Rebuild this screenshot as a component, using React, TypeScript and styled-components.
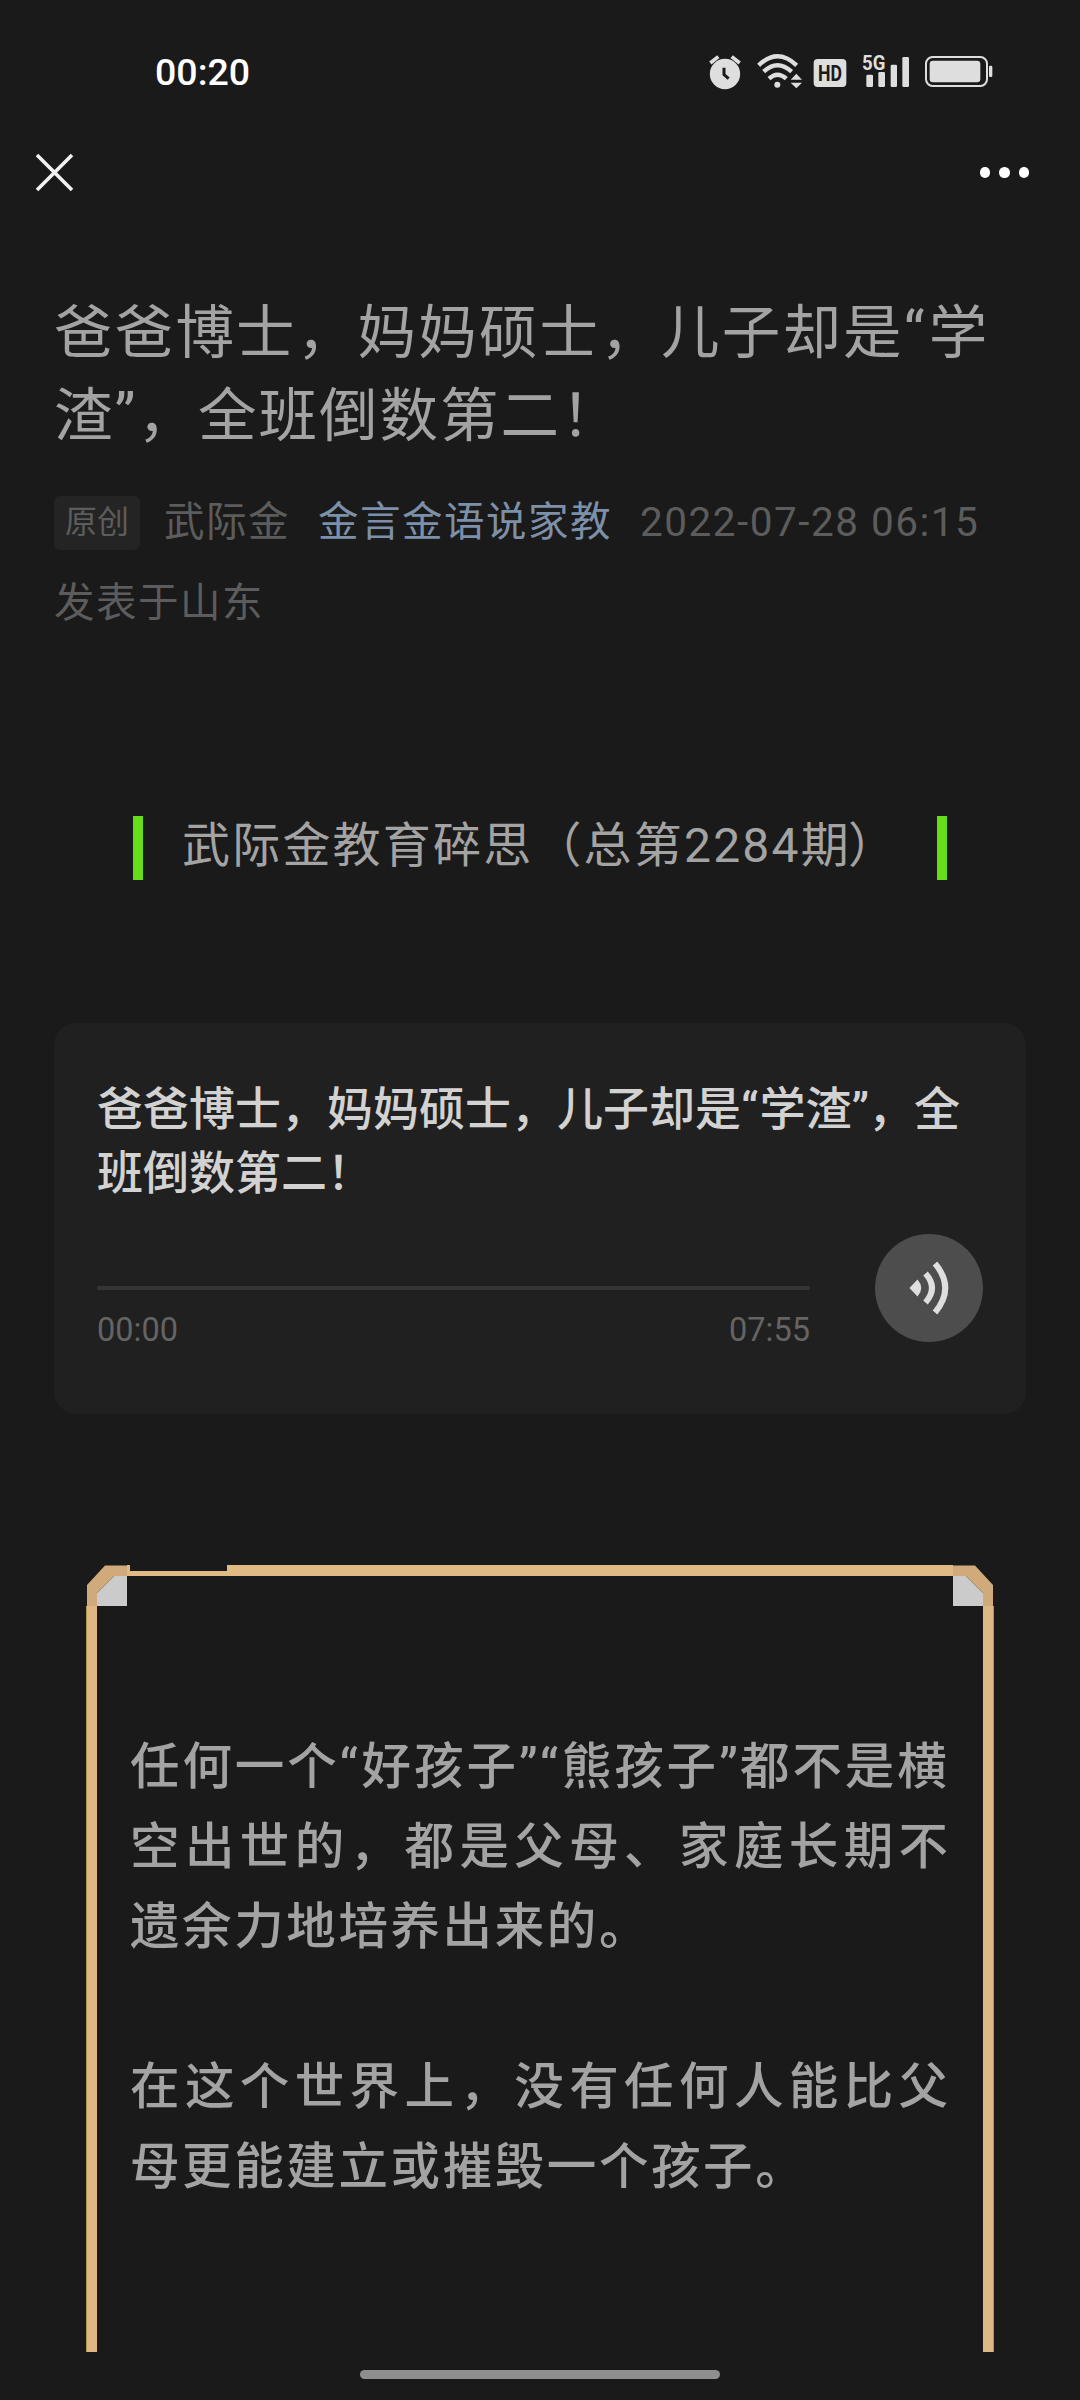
import React from "react";
import styled, { createGlobalStyle } from "styled-components";

const GlobalStyle = createGlobalStyle`
  * { box-sizing: border-box; }
  body { margin: 0; background: #1a1a1a; }
`;

const Screen = styled.div`
  width: 1080px;
  height: 2400px;
  overflow: hidden;
  display: flex;
  flex-direction: column;
  background: #1a1a1a;
  font-family: Roboto, "Noto Sans CJK SC", sans-serif;
`;

const StatusBar = styled.header`
  height: 120px;
  flex: none;
  display: flex;
  justify-content: space-between;
  align-items: flex-start;
  padding: 53px 87px 0 155px;
`;

const Clock = styled.time`
  font-size: 37.5px;
  line-height: 38px;
  font-weight: 500;
  color: #fff;
`;

const StatusIcons = styled.div`
  display: flex;
  gap: 15px;
`;

const StatusSvg = styled.svg<{ $pull?: number }>`
  display: block;
  height: 37px;
  margin-left: ${(p) => -(p.$pull ?? 0)}px;
  overflow: visible;
  fill: #dedede;
`;

const NavBar = styled.nav`
  height: 118px;
  flex: none;
  display: flex;
  justify-content: space-between;
  align-items: flex-start;
  padding: 32px 51px 0 34px;
`;

const Dots = styled.div`
  display: flex;
  gap: 8.8px;
  padding-top: 15px;
`;

const Dot = styled.i`
  width: 10.5px;
  height: 10.5px;
  border-radius: 50%;
  background: #fff;
`;

const Article = styled.main`
  flex: 1;
  min-height: 0;
  padding: 54px 54px 0;
`;

const Line = styled.span<{ $spacing?: number }>`
  display: block;
  white-space: nowrap;
  letter-spacing: ${(p) => (p.$spacing === undefined ? "inherit" : `${p.$spacing}px`)};
`;

const Quote = styled.span<{ $width: number }>`
  display: inline-block;
  width: ${(p) => p.$width}px;
  letter-spacing: 0;
  font-family: Roboto, sans-serif;
`;

const Title = styled.h1`
  margin: 0;
  font-size: 58.5px;
  font-weight: 400;
  line-height: 83px;
  letter-spacing: 2.2px;
  color: #a3a3a3;
`;

const Meta = styled.div`
  margin-top: 24px;
  font-size: 40.5px;
  line-height: 81px;
  letter-spacing: 1.5px;
  color: #5c5c5c;
`;

const MetaRow = styled.div`
  display: flex;
  align-items: center;
  height: 81px;
  white-space: nowrap;
`;

const Badge = styled.span`
  width: 86px;
  height: 54px;
  margin-right: 24px;
  border-radius: 6px;
  background: #242424;
  font-size: 32px;
  line-height: 52px;
  letter-spacing: 0;
  text-align: center;
`;

const Author = styled.span`
  width: 154px;
`;

const Account = styled.a`
  width: 322px;
  color: #7d90a9;
`;

const Issue = styled.div`
  display: flex;
  align-items: center;
  width: 814px;
  height: 64px;
  margin: 172px auto 0 79px;
  padding: 0 0 5px 39px;
  border: solid #66dd1a;
  border-width: 0 10px;
  font-size: 48px;
  line-height: 59px;
  letter-spacing: 2.2px;
  color: #a3a3a3;
  white-space: nowrap;
`;

const ClosingMark = styled.span`
  margin-left: -3px;
`;

const AudioCard = styled.section`
  height: 391px;
  margin-top: 143px;
  padding: 54px 43px 0;
  border-radius: 22px;
  background: #202020;
`;

const AudioTitle = styled.h2`
  margin: 0;
  font-size: 46px;
  font-weight: 500;
  line-height: 64px;
  color: #d2d2d2;
`;

const Player = styled.div`
  display: flex;
  justify-content: space-between;
  margin-top: 29px;
`;

const Progress = styled.div`
  width: 713px;
  padding-top: 52px;
`;

const Track = styled.div`
  height: 4px;
  border-radius: 2px;
  background: #353535;
`;

const Times = styled.div`
  display: flex;
  justify-content: space-between;
  margin-top: 21px;
  font-size: 32.5px;
  line-height: 38px;
  color: #646464;
`;

const PlayButton = styled.button`
  width: 108px;
  height: 108px;
  padding: 0;
  border: 0;
  border-radius: 50%;
  background: #4d4d4d;
`;

const Frame = styled.section`
  width: 908px;
  margin: 151px 0 0 32px;
`;

const FrameTop = styled.div`
  display: flex;
  height: 41px;
`;

const Edge = styled.div<{ $width: number; $inset?: number }>`
  width: ${(p) => p.$width}px;
  height: ${(p) => 11 - (p.$inset ?? 0)}px;
  margin-top: ${(p) => p.$inset ?? 0}px;
  background: #e0b985;
`;

const FrameBody = styled.div`
  height: 746px;
  padding: 121px 0 0 33px;
  border: solid #ddb884;
  border-width: 0 10px;
`;

const FrameOutline = styled.div`
  border: solid #b5984a;
  border-width: 0 1px;
`;

const Paragraph = styled.p`
  margin: 0 0 80px;
  font-size: 49.5px;
  font-weight: 500;
  line-height: 80px;
  color: #a3a3a3;
`;

const HomeArea = styled.footer`
  height: 48px;
  flex: none;
  display: flex;
  justify-content: center;
  padding-top: 18px;
`;

const HomeHandle = styled.div`
  width: 360px;
  height: 9px;
  border-radius: 5px;
  background: #8e8e8e;
`;

function Corner({ flip }: { flip?: boolean }) {
  return (
    <svg width="41" height="41" viewBox="0 0 41 41">
      <g transform={flip ? "translate(41 0) scale(-1 1)" : undefined}>
        <path d="M28 11H41V41H11V28Z" fill="#cbcbcb" />
        <path d="M1 41V20L19 .5H41V11H28L11 28V41Z" fill="#d1aa7b" />
      </g>
    </svg>
  );
}

function AlarmIcon() {
  return (
    <StatusSvg width="34" viewBox="54 69 102 111">
      <circle cx="105" cy="132" r="45.5" />
      <path d="M61 99L85 80M149 99L125 80" stroke="#dedede" strokeWidth="11" fill="none" />
      <path d="M102 113V134L116 146" stroke="#1a1a1a" strokeWidth="9" fill="none" />
    </StatusSvg>
  );
}

function WifiIcon() {
  return (
    <StatusSvg width="45" viewBox="201 69 135 111">
      <g fill="none" stroke="#dedede" strokeWidth="13">
        <path d="M206 106Q262 52 320 106" />
        <path d="M221 125Q262 86 305 125" />
        <path d="M237 146Q262 122 289 146" />
      </g>
      <circle cx="262" cy="164" r="9" />
      <path d="M302 149L319 131L336 149ZM302 158H336L319 175Z" />
    </StatusSvg>
  );
}

function HdIcon() {
  return (
    <StatusSvg width="34" viewBox="369 69 102 111" $pull={4}>
      <rect x="371" y="87" width="98" height="84" rx="12" />
      <text
        x="420"
        y="152"
        textAnchor="middle"
        textLength="72"
        lengthAdjust="spacingAndGlyphs"
        fontSize="66"
        fontWeight="700"
        fill="#1a1a1a"
      >
        HD
      </text>
    </StatusSvg>
  );
}

function SignalIcon() {
  return (
    <StatusSvg width="48" viewBox="516 69 144 111">
      <text x="516" y="120" textLength="70" lengthAdjust="spacingAndGlyphs" fontSize="61" fontWeight="700">
        5G
      </text>
      <rect x="529" y="134" width="20" height="37" rx="4" />
      <rect x="565" y="126" width="20" height="45" rx="4" />
      <rect x="602" y="104" width="19" height="67" rx="4" />
      <rect x="637" y="81" width="20" height="90" rx="4" />
    </StatusSvg>
  );
}

function BatteryIcon() {
  return (
    <StatusSvg width="68" viewBox="705 69 204 111">
      <rect x="708" y="81" width="183" height="87" rx="20" fill="none" stroke="#dedede" strokeWidth="6" />
      <rect x="719" y="92" width="152" height="65" rx="10" />
      <rect x="897" y="107" width="10" height="34" rx="4" />
    </StatusSvg>
  );
}

export default function App() {
  return (
    <Screen>
      <GlobalStyle />
      <StatusBar>
        <Clock>00:20</Clock>
        <StatusIcons>
          <AlarmIcon />
          <WifiIcon />
          <HdIcon />
          <SignalIcon />
          <BatteryIcon />
        </StatusIcons>
      </StatusBar>

      <NavBar>
        <svg width="41" height="41" viewBox="0 0 41 41">
          <path d="M3 3L38 38M38 3L3 38" stroke="#f2f2f2" strokeWidth="3.6" />
        </svg>
        <Dots>
          <Dot />
          <Dot />
          <Dot />
        </Dots>
      </NavBar>

      <Article>
        <Title>
          <Line>
            爸爸博士，妈妈硕士，儿子却是<Quote $width={25}>“</Quote>学
          </Line>
          <Line $spacing={2}>
            渣<Quote $width={23}>”</Quote>，全班倒数第二！
          </Line>
        </Title>

        <Meta>
          <MetaRow>
            <Badge>原创</Badge>
            <Author>武际金</Author>
            <Account>金言金语说家教</Account>
            <span>2022-07-28 06:15</span>
          </MetaRow>
          <MetaRow>发表于山东</MetaRow>
        </Meta>

        <Issue>
          <span>武际金教育碎思（总第2284期</span>
          <ClosingMark>）</ClosingMark>
        </Issue>

        <AudioCard>
          <AudioTitle>
            <Line>
              爸爸博士，妈妈硕士，儿子却是<Quote $width={18.5}>“</Quote>学渣<Quote $width={16.5}>”</Quote>，全
            </Line>
            <Line>班倒数第二！</Line>
          </AudioTitle>
          <Player>
            <Progress>
              <Track />
              <Times>
                <span>00:00</span>
                <span>07:55</span>
              </Times>
            </Progress>
            <PlayButton aria-label="play">
              <svg width="108" height="108" viewBox="0 0 108 108">
                <path d="M34.5 54L42.5 45.5Q50 54 42.5 62.5Z" fill="#dedede" />
                <path d="M50.5 39.5Q63.5 54 50.5 68.5M60 29.500Q80.500 54 60 78.500" fill="none" stroke="#dedede" strokeWidth="6" />
              </svg>
            </PlayButton>
          </Player>
        </AudioCard>

        <Frame>
          <FrameTop>
            <Corner />
            <Edge $width={3} />
            <Edge $width={97} $inset={6} />
            <Edge $width={726} />
            <Corner flip />
          </FrameTop>
          <FrameOutline>
            <FrameBody>
              <Paragraph>
                <Line $spacing={2.9}>
                  任何一个<Quote $width={22}>“</Quote>好孩子<Quote $width={21}>”</Quote>
                  <Quote $width={22}>“</Quote>熊孩子<Quote $width={21}>”</Quote>都不是横
                </Line>
                <Line $spacing={5.4}>空出世的，都是父母、家庭长期不</Line>
                <Line $spacing={2.6}>遗余力地培养出来的。</Line>
              </Paragraph>
              <Paragraph>
                <Line $spacing={5.4}>在这个世界上，没有任何人能比父</Line>
                <Line $spacing={2.6}>母更能建立或摧毁一个孩子。</Line>
              </Paragraph>
            </FrameBody>
          </FrameOutline>
        </Frame>
      </Article>

      <HomeArea>
        <HomeHandle />
      </HomeArea>
    </Screen>
  );
}
